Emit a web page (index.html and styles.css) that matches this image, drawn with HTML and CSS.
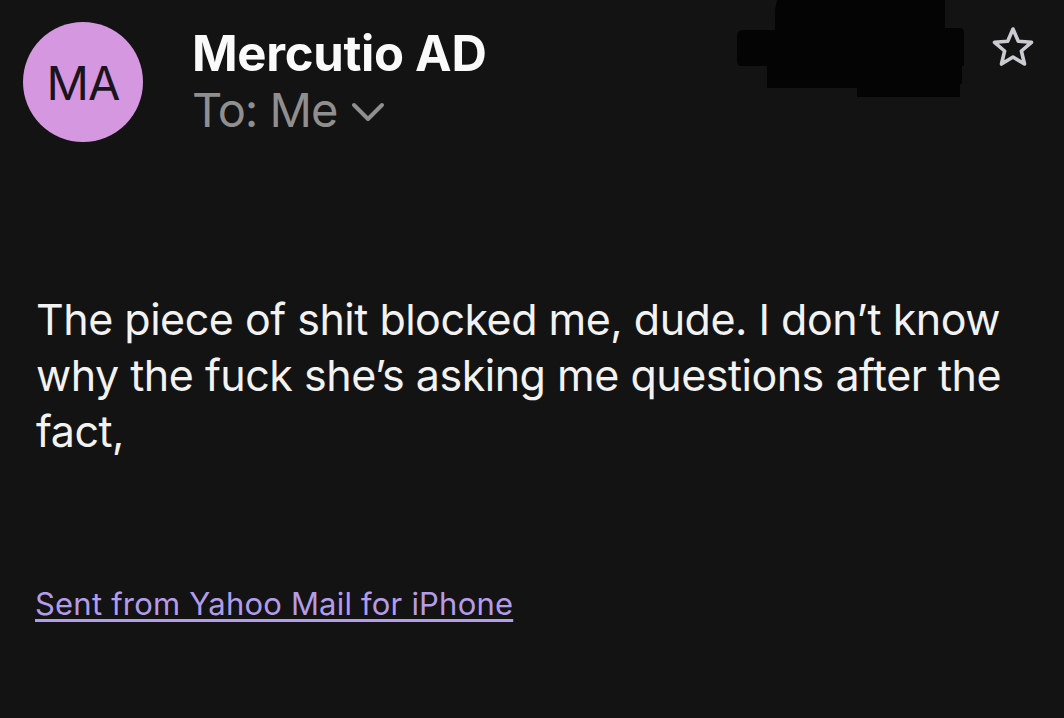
FILE: index.html
```html
<!DOCTYPE html>
<html lang="en">
<head>
<meta charset="utf-8">
<title>Mail</title>
<link rel="stylesheet" href="styles.css">
</head>
<body>
<div class="mail">
  <header class="head">
    <div class="avatar">MA</div>
    <div class="who">
      <div class="name">Mercutio AD</div>
      <div class="to">To: Me
        <svg class="chev" width="34" height="22" viewBox="0 0 34 22"><path d="M3 4 L17 18 L31 4" fill="none" stroke="#8f8f8f" stroke-width="4" stroke-linecap="round" stroke-linejoin="round"/></svg>
      </div>
    </div>
    <div class="spacer"></div>
    <svg class="star" width="46" height="46" viewBox="0 0 46 46"><path d="M23 4 L28.3 16.2 L41.5 17.3 L31.4 26 L34.5 39 L23 32 L11.5 39 L14.6 26 L4.5 17.3 L17.7 16.2 Z" fill="none" stroke="#c9cbd1" stroke-width="3.6" stroke-linejoin="round"/></svg>
    <svg class="redact" width="230" height="100" viewBox="0 0 230 100">
      <path d="M40 0 H208 V28 H222 Q227 28 227 33 V66 H225 V84 H223 V97 H120 V88 H30 V66 H4 Q0 66 0 60 V36 Q0 30 6 30 H38 V10 Z" fill="#040404"/>
    </svg>
  </header>
  <p class="body">The piece of shit blocked me, dude. I don’t know why the fuck she’s asking me questions after the fact,</p>
  <a class="sig" href="#">Sent from Yahoo Mail for iPhone</a>
</div>
</body>
</html>
```
FILE: styles.css
```css
html, body {
  margin: 0;
  padding: 0;
  background: #131313;
}
body {
  width: 1064px;
  height: 718px;
  overflow: hidden;
  font-family: Inter, "Noto Sans", sans-serif;
}
.mail {
  display: flex;
  flex-direction: column;
}
.head {
  display: flex;
  align-items: flex-start;
  padding: 22px 28px 0 23px;
  position: relative;
}
.avatar {
  width: 120px;
  height: 120px;
  border-radius: 50%;
  background: #d597e0;
  color: #1a141c;
  font-size: 47px;
  font-weight: 400;
  display: flex;
  align-items: center;
  justify-content: center;
  letter-spacing: -1px;
  flex: none;
}
.who {
  margin-left: 49px;
  margin-top: 3px;
  display: flex;
  flex-direction: column;
}
.name {
  color: #fafafa;
  font-size: 49px;
  font-weight: 700;
  line-height: 58px;
  letter-spacing: -0.3px;
}
.to {
  color: #8f8f8f;
  font-size: 47px;
  line-height: 53px;
  display: flex;
  align-items: center;
  gap: 14px;
  letter-spacing: -1px;
}
.chev {
  margin-top: 4px;
}
.spacer {
  flex: 1;
}
.redact {
  position: absolute;
  left: 737px;
  top: 0;
}
.star {
  flex: none;
  margin-top: 3px;
}
.body {
  margin: 149px 0 0 36px;
  width: 1010px;
  color: #f2f2f2;
  font-size: 43px;
  line-height: 56px;
  font-weight: 400;
  letter-spacing: -0.5px;
}
.sig {
  margin: 125px 0 0 35px;
  align-self: flex-start;
  color: #b39ce9;
  font-size: 31px;
  line-height: 40px;
  text-decoration: underline;
  text-decoration-thickness: 3px;
  text-underline-offset: 4px;
  letter-spacing: 0.2px;
}
```
